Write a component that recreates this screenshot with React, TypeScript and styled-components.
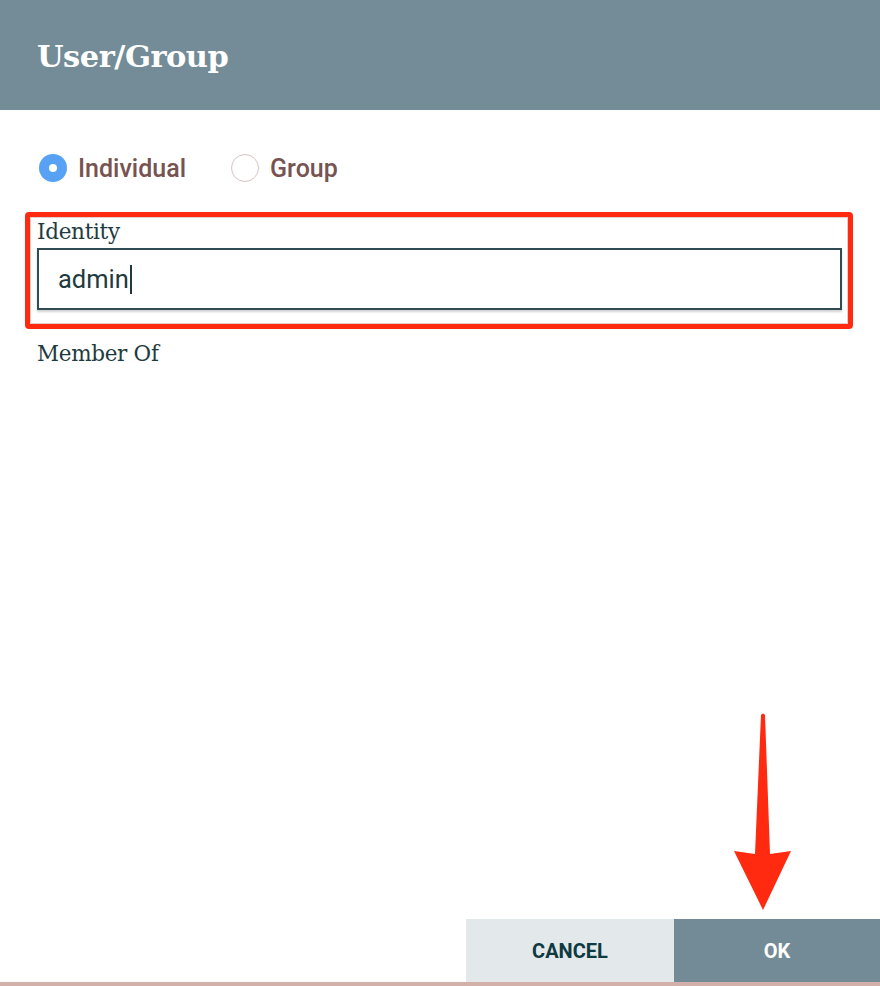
import React from "react";
import styled, { createGlobalStyle } from "styled-components";

const Global = createGlobalStyle`
  html, body { margin: 0; padding: 0; background: #ffffff; }
  #root { width: 880px; height: 986px; }
`;

const Dialog = styled.div`
  position: relative;
  width: 880px;
  height: 986px;
  display: flex;
  flex-direction: column;
  background: #ffffff;
  overflow: hidden;
`;

const Header = styled.div`
  height: 110px;
  flex: 0 0 110px;
  background: #738c98;
  display: flex;
  align-items: center;
  padding-left: 37px;
  box-sizing: border-box;
`;

const Title = styled.h1`
  margin: 0 0 -2px 0;
  font-family: "DejaVu Serif", serif;
  font-weight: bold;
  font-size: 30.5px;
  color: #ffffff;
  letter-spacing: -0.5px;
`;

const Body = styled.div`
  flex: 1;
  display: flex;
  flex-direction: column;
  padding: 44px 27px 0 25px;
`;

const RadioRow = styled.div`
  display: flex;
  align-items: center;
  padding-left: 14px;
  height: 28px;
`;

const RadioOption = styled.label`
  display: flex;
  align-items: center;
  gap: 11px;
  margin-right: 45px;
  font-family: Roboto, "Noto Sans", sans-serif;
  font-weight: 500;
  font-size: 25px;
  color: #775351;
`;

const RadioDot = styled.span<{ $checked?: boolean }>`
  box-sizing: border-box;
  width: 28px;
  height: 28px;
  border-radius: 50%;
  display: inline-flex;
  align-items: center;
  justify-content: center;
  background: ${(p) => (p.$checked ? "#57a2f5" : "#ffffff")};
  border: ${(p) => (p.$checked ? "none" : "1.5px solid #d7c3c2")};
  &::after {
    content: "";
    width: 8px;
    height: 8px;
    border-radius: 50%;
    background: #ffffff;
    display: ${(p) => (p.$checked ? "block" : "none")};
  }
`;

const Highlight = styled.div`
  margin-top: 30px;
  border: 5px solid #ff2a0f;
  border-radius: 4px;
  padding: 0 6px 14px 7px;
  box-shadow: inset 0 0 0 1px #e3d0cc;
`;

const FieldLabel = styled.div`
  font-family: "DejaVu Serif", serif;
  font-size: 21.5px;
  color: #1e3b40;
  line-height: 29px;
  letter-spacing: -0.3px;
`;

const Input = styled.div`
  margin-top: 2px;
  height: 62px;
  box-sizing: border-box;
  border: 2px solid #2f4c55;
  box-shadow: 0 2px 2px rgba(0, 0, 0, 0.18);
  display: flex;
  align-items: center;
  padding-left: 19px;
  font-family: Roboto, "Noto Sans", sans-serif;
  font-size: 25.5px;
  color: #1f3a40;
`;

const Caret = styled.span`
  display: inline-block;
  width: 2px;
  height: 29px;
  background: #1f3a40;
  margin-left: 1px;
`;

const MemberLabel = styled(FieldLabel)`
  margin-top: 10px;
  padding-left: 12px;
`;

const Footer = styled.div`
  display: flex;
  justify-content: flex-end;
  height: 63px;
  flex: 0 0 63px;
`;

const Button = styled.button<{ $primary?: boolean }>`
  width: ${(p) => (p.$primary ? "206px" : "208px")};
  height: 63px;
  border: none;
  margin: 0;
  background: ${(p) => (p.$primary ? "#728b97" : "#e3e8eb")};
  color: ${(p) => (p.$primary ? "#ffffff" : "#0e3a41")};
  font-family: Roboto, "Noto Sans", sans-serif;
  font-weight: bold;
  font-size: 20px;
  cursor: pointer;
`;

const BottomStrip = styled.div`
  height: 4px;
  flex: 0 0 4px;
  background: #d4b0ab;
`;

const Arrow = styled.svg`
  position: absolute;
  left: 732px;
  top: 712px;
  width: 62px;
  height: 200px;
`;

export default function App() {
  return (
    <>
      <Global />
      <Dialog>
        <Header>
          <Title>User/Group</Title>
        </Header>
        <Body>
          <RadioRow>
            <RadioOption>
              <RadioDot $checked />
              Individual
            </RadioOption>
            <RadioOption>
              <RadioDot />
              Group
            </RadioOption>
          </RadioRow>
          <Highlight>
            <FieldLabel>Identity</FieldLabel>
            <Input>
              admin
              <Caret />
            </Input>
          </Highlight>
          <MemberLabel>Member Of</MemberLabel>
        </Body>
        <Footer>
          <Button>CANCEL</Button>
          <Button $primary>OK</Button>
        </Footer>
        <BottomStrip />
        <Arrow viewBox="0 0 62 200">
          <path
            d="M29 3 Q31 0 33 3 L38 142 L59 139 L31 198 L2 139 L23 142 Z"
            fill="#ff2a0f"
          />
        </Arrow>
      </Dialog>
    </>
  );
}
